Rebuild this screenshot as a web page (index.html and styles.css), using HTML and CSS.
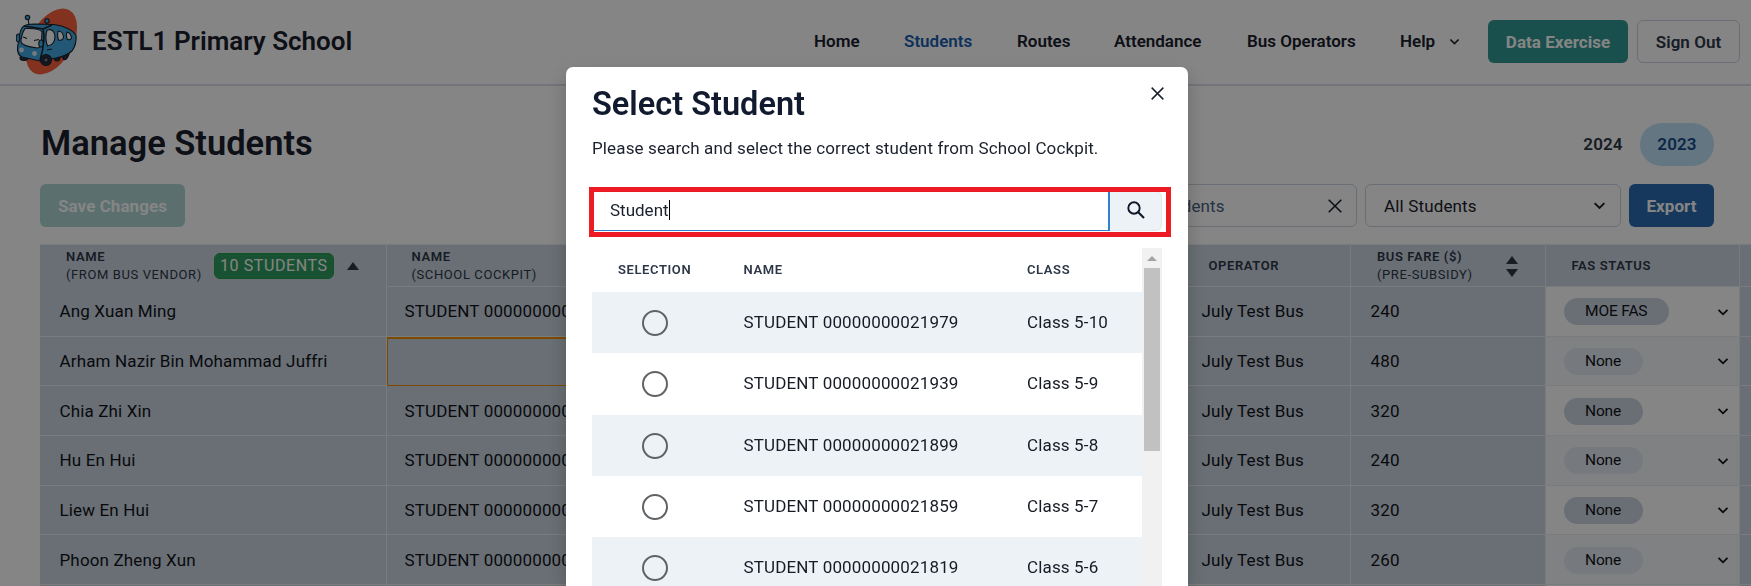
FILE: index.html
```html
<!DOCTYPE html>
<html lang="en">
<head>
<meta charset="utf-8">
<title>Manage Students</title>
<link rel="stylesheet" href="styles.css">
</head>
<body>
<svg class="defs" width="0" height="0">
  <symbol id="chev" viewBox="0 0 12 12"><path d="M1.500 3.800 6 8.300l4.500-4.500" fill="none" stroke="currentColor" stroke-width="1.800"/></symbol>
  <symbol id="cross" viewBox="0 0 14 14"><path d="M.7.7l12.600 12.600M13.300.7.7 13.300" fill="none" stroke="currentColor" stroke-width="1.600"/></symbol>
  <symbol id="up" viewBox="0 0 12 8"><path d="M6 0l6 8H0z" fill="currentColor"/></symbol>
</svg>
<header class="topbar">
  <svg class="logo" viewBox="0 0 62 68" width="62" height="68">
    <ellipse cx="35.500" cy="33.500" rx="21" ry="36" transform="rotate(30 35.500 33.500)" fill="#f9603a"/>
    <g stroke="#16202b" stroke-width="1.100" stroke-linejoin="round">
      <path d="M13 17 12 10M31 17l-.5-3" fill="none"/>
      <circle cx="11.500" cy="9.500" r="2.200" fill="#41a9e0"/><circle cx="31" cy="13" r="2.200" fill="#41a9e0"/>
      <ellipse cx="8" cy="50" rx="4" ry="2.500" fill="#27313d"/>
      <ellipse cx="41" cy="49" rx="3" ry="4" fill="#27313d"/><ellipse cx="50" cy="47" rx="2.500" ry="5" transform="rotate(25 50 47)" fill="#27313d"/>
      <path d="M8 18Q11 16 18 16L38 16.500Q54 19 60 27Q61 36 56 43Q50 48 40 50L24 53 6 49Q1 47 1.500 39L4 25Q5 20 8 18z" fill="#41a9e0"/>
      <path d="M27 21Q30 32 24 52M8 18 27 21 36 17" fill="none" stroke-width="1.500"/>
      <path d="M9 20.500Q5 27 5 34Q6 38 21 40Q25 40 25.500 34L26 24Q24 20 9 20.500z" fill="#fff"/>
      <path d="M31 22Q38 20 39 28Q39 37 31.500 38Q28.500 30 31 22z" fill="#fff"/>
      <path d="M42 23Q47 23 47.500 29Q47 33 42.500 32Q41 28 42 23zM51 24Q55 25 55.500 30Q54 33 51 31Q49.500 27 51 24z" fill="#fff"/>
      <path d="M7 29l4 1.500M18 32.500l5-1M31 42l5-1" fill="none"/>
      <ellipse cx="2" cy="30" rx="1.800" ry="4" fill="#41a9e0"/><ellipse cx="25" cy="35.500" rx="2.200" ry="3.500" fill="#41a9e0"/>
      <circle cx="30" cy="52" r="5.500" fill="#27313d"/><circle cx="30" cy="52" r="2.300" fill="#6c7986"/>
    </g>
    <circle cx="5.500" cy="42" r="2.400" fill="#dfeaf2"/><circle cx="18.500" cy="45.500" r="2.400" fill="#dfeaf2"/>
  </svg>
  <div class="brand"><span>ESTL1 Primary School</span></div>
  <nav class="nav">
    <a class="home">Home</a><a class="current">Students</a><a class="routes">Routes</a><a class="attend">Attendance</a><a class="ops">Bus Operators</a><a class="help">Help</a>
    <svg width="11" height="11"><use href="#chev"/></svg>
  </nav>
  <button class="btn teal exercise">Data Exercise</button>
  <button class="btn outline signout">Sign Out</button>
</header>
<main class="page">
  <div class="title-row">
    <h1>Manage Students</h1>
    <div class="years"><span class="year">2024</span><span class="year on">2023</span></div>
  </div>
  <div class="tools">
    <button class="btn teal save">Save Changes</button>
    <div class="field search"><span class="search-text">Search students</span><svg width="14" height="14"><use href="#cross"/></svg></div>
    <div class="field filter"><span>All Students</span><svg width="13" height="13"><use href="#chev"/></svg></div>
    <button class="btn blue export">Export</button>
  </div>
  <section class="grid">
    <div class="row head">
      <div class="cell hname"><div><b>NAME</b><i>(FROM BUS VENDOR)</i></div><span class="badge">10 STUDENTS</span><svg width="12" height="8"><use href="#up"/></svg></div>
      <div class="cell"><div><b>NAME</b><i>(SCHOOL COCKPIT)</i></div></div>
      <div class="cell hop"><b>OPERATOR</b></div>
      <div class="cell"><div><b>BUS FARE ($)</b><i>(PRE-SUBSIDY)</i></div><span class="sort"><svg width="12" height="8"><use href="#up"/></svg><svg class="down" width="12" height="8"><use href="#up"/></svg></span></div>
      <div class="cell hfas"><b>FAS STATUS</b></div>
      <div class="cell"></div>
    </div>
    <div class="row"><div class="cell">Ang Xuan Ming</div><div class="cell">STUDENT 00000000021979</div><div class="cell op">July Test Bus</div><div class="cell">240</div><div class="cell fas"><span class="pill">MOE FAS</span><svg width="12" height="12"><use href="#chev"/></svg></div><div class="cell"></div></div>
    <div class="row alt"><div class="cell">Arham Nazir Bin Mohammad Juffri</div><div class="cell empty"></div><div class="cell op">July Test Bus</div><div class="cell">480</div><div class="cell fas"><span class="pill">None</span><svg width="12" height="12"><use href="#chev"/></svg></div><div class="cell"></div></div>
    <div class="row"><div class="cell">Chia Zhi Xin</div><div class="cell">STUDENT 00000000021899</div><div class="cell op">July Test Bus</div><div class="cell">320</div><div class="cell fas"><span class="pill">None</span><svg width="12" height="12"><use href="#chev"/></svg></div><div class="cell"></div></div>
    <div class="row alt"><div class="cell">Hu En Hui</div><div class="cell">STUDENT 00000000021859</div><div class="cell op">July Test Bus</div><div class="cell">240</div><div class="cell fas"><span class="pill">None</span><svg width="12" height="12"><use href="#chev"/></svg></div><div class="cell"></div></div>
    <div class="row"><div class="cell">Liew En Hui</div><div class="cell">STUDENT 00000000021819</div><div class="cell op">July Test Bus</div><div class="cell">320</div><div class="cell fas"><span class="pill">None</span><svg width="12" height="12"><use href="#chev"/></svg></div><div class="cell"></div></div>
    <div class="row alt"><div class="cell">Phoon Zheng Xun</div><div class="cell">STUDENT 00000000021779</div><div class="cell op">July Test Bus</div><div class="cell">260</div><div class="cell fas"><span class="pill">None</span><svg width="12" height="12"><use href="#chev"/></svg></div><div class="cell"></div></div>
    <div class="row last"><div class="cell"></div><div class="cell"></div><div class="cell"></div><div class="cell"></div><div class="cell fas"></div><div class="cell"></div></div>
  </section>
</main>
<div class="overlay">
  <div class="modal" role="dialog">
    <svg class="close" width="13" height="13"><use href="#cross"/></svg>
    <h2>Select Student</h2>
    <p class="lead">Please search and select the correct student from School Cockpit.</p>
    <div class="lookup">
      <div class="entry"><span>Student</span><span class="caret"></span></div>
      <div class="go"><svg width="18" height="18" viewBox="0 0 18 18"><circle cx="7" cy="7" r="5.700" fill="none" stroke="#0f172a" stroke-width="1.900"/><path d="M11 11l6 6" stroke="#0f172a" stroke-width="2.100"/></svg></div>
      <div class="highlight"></div>
    </div>
    <div class="results">
      <div class="list">
        <div class="item item-head"><b class="sel">SELECTION</b><b>NAME</b><b>CLASS</b></div>
        <div class="item shade"><span class="radio"></span><span>STUDENT 00000000021979</span><span>Class 5-10</span></div>
        <div class="item"><span class="radio"></span><span>STUDENT 00000000021939</span><span>Class 5-9</span></div>
        <div class="item shade"><span class="radio"></span><span>STUDENT 00000000021899</span><span>Class 5-8</span></div>
        <div class="item"><span class="radio"></span><span>STUDENT 00000000021859</span><span>Class 5-7</span></div>
        <div class="item shade"><span class="radio"></span><span>STUDENT 00000000021819</span><span>Class 5-6</span></div>
      </div>
      <div class="scroll"><svg width="10" height="5" viewBox="0 0 10 5"><path d="M5 0l5 5H0z" fill="#a3a3a3"/></svg><div class="thumb"></div></div>
    </div>
  </div>
</div>
</body>
</html>
```

FILE: styles.css
```css
* { box-sizing: border-box; }
html, body { height: 586px; overflow: hidden; }
body { margin: 0; background: #fff; color: #1a202c; font-family: Roboto, "Liberation Sans", sans-serif; font-size: 17px; letter-spacing: 0.15px; }
.defs { display: block; width: 0; height: 0; }
h1, h2, p { margin: 0; }
svg { flex: none; display: block; }
.topbar { display: flex; align-items: center; height: 86px; padding: 0 11px 1px 16px; border-bottom: 2px solid #dcdce8; }
.brand { margin-left: 14px; width: 722px; padding-bottom: 2px; font-size: 26px; font-weight: 600; letter-spacing: 0; white-space: nowrap; }
.nav { display: flex; align-items: center; width: 674px; padding-bottom: 1px; font-weight: 600; letter-spacing: 0; white-space: nowrap; }
.nav a { flex: none; }
.home { width: 90px; }
.current { width: 113px; color: #1c5fb0; }
.routes { width: 97px; }
.attend { width: 133px; }
.ops { width: 153px; }
.help { width: 49px; }
.btn { display: flex; flex: none; align-items: center; justify-content: center; height: 43px; padding: 0; border: 0; border-radius: 6px; font: 700 17px Roboto, sans-serif; letter-spacing: 0.05px; color: #fff; white-space: nowrap; }
.teal { background: #319795; }
.blue { background: #2b6cb0; }
.outline { background: #fff; border: 1px solid #cbd5e0; color: #2d3748; font-weight: 600; }
.exercise { width: 140px; margin-right: 9px; }
.signout { width: 103px; }
.page { height: 500px; padding-left: 40px; overflow: hidden; }
.title-row { display: flex; justify-content: space-between; align-items: center; height: 98px; padding: 18px 37px 0 1px; }
h1 { padding-bottom: 2px; font-size: 34.500px; font-weight: 600; letter-spacing: 0; }
.years { display: flex; }
.year { display: flex; align-items: center; justify-content: center; width: 74px; height: 43px; border-radius: 22px; font-weight: 600; color: #2d3748; }
.on { background: #bee3f8; color: #1a4b8c; }
.tools { display: flex; padding-right: 37px; height: 60px; }
.save { width: 145px; opacity: .4; margin-right: auto; }
.field { display: flex; align-items: center; justify-content: space-between; height: 43px; border: 1px solid #cbd5e0; border-radius: 6px; }
.search { width: 290px; margin-right: 8px; padding: 0 14px 0 32px; }
.search-text { color: #4a5f80; }
.filter { width: 256px; margin-right: 8px; padding: 0 14px 0 18px; }
.export { width: 85px; }
.row { display: grid; grid-template-columns: 346.500px 797px 167.500px 194.500px 194px 20px; height: 49.670px; }
.cell { display: flex; align-items: center; background: #cbd5e0; border-right: 1px solid #e9edf2; border-bottom: 1px solid #e9edf2; padding-left: 19.500px; white-space: nowrap; color: #101319; }
.cell:nth-child(2) { padding-left: 18px; }
.op { padding-left: 18px; }
.head { height: 43px; font-size: 13px; letter-spacing: .6px; }
.head .cell { border-top: 1px solid #e9edf2; padding-top: 1px; padding-left: 26px; color: #2d3748; line-height: 18px; }
.head .cell:nth-child(2) { padding-left: 25px; }
.head .hop { padding-left: 25px; }
.head b, .head i { display: block; font-style: normal; font-weight: 600; }
.head i { font-weight: 400; }
.head .hname { border-bottom-color: #cbd5e0; }
.badge { display: flex; align-items: center; justify-content: center; width: 120px; height: 26px; margin: 0 13px 0 12px; border: 1px solid #22a045; border-radius: 6px; background: #2f9e63; color: #fff; font-size: 16px; }
.sort { display: grid; gap: 5px; margin-left: 33px; }
.down { transform: rotate(180deg); }
.empty { border: 1px solid #ef8f00; border-top-width: 2px; }
.fas { background: #fff; justify-content: space-between; padding: 1px 10px 0 18px; }
.alt .fas { background: #f5f7fb; }
.pill { height: 27px; line-height: 26px; border-radius: 14px; background: #cbd5e0; padding: 0 21.500px; font-size: 15.500px; letter-spacing: -0.150px; }
.alt .pill { background: #e2e8f0; }
.overlay { position: fixed; inset: 0; background: rgba(0,0,0,.48); display: flex; justify-content: center; padding: 67px 0 0 3px; overflow: hidden; }
.modal { position: relative; width: 622px; height: 519px; padding: 20px 26px 0; background: #fff; border-radius: 7px 7px 0 0; box-shadow: 0 8px 20px rgba(0,0,0,.22); overflow: hidden; }
.close { position: absolute; right: 24px; top: 20px; }
h2 { font-size: 32.500px; line-height: 34px; letter-spacing: 0; font-weight: 600; color: #111a2e; }
.lead { margin-top: 15px; line-height: 24px; letter-spacing: .13px; color: #1a202c; white-space: nowrap; }
.lookup { position: relative; display: flex; width: 571px; height: 40px; margin-top: 31px; }
.entry { display: flex; align-items: center; width: 518px; padding: 0 0 2px 17px; letter-spacing: 0; border: 1px solid #3182ce; border-right-width: 2px; }
.caret { width: 1px; height: 20px; background: #000; }
.go { display: flex; align-items: center; justify-content: center; width: 52px; padding-bottom: 2px; background: #edf2f7; border: 1px solid #e2e8f0; border-left: 0; border-radius: 0 6px 6px 0; }
.highlight { position: absolute; left: -3px; top: -4px; width: 582px; height: 50px; border: 5px solid #ed1c24; }
.results { display: flex; height: 338px; margin-top: 17px; overflow: hidden; }
.list { width: 550px; }
.item { display: grid; grid-template-columns: 151.500px 283.500px 1fr; align-items: center; height: 61.300px; color: #171b26; padding-bottom: 1px; }
.item-head { height: 44px; padding: 0 0 2px; font-size: 13px; letter-spacing: .6px; color: #2d3748; }
.item-head b { font-weight: 600; }
.sel { padding-left: 26px; }
.shade { background: #edf2f7; }
.radio { width: 26px; height: 26px; margin-left: 50px; margin-top: 2px; border: 2px solid #606366; border-radius: 50%; }
.scroll { display: flex; flex-direction: column; align-items: center; width: 20px; padding-top: 8px; background: #f1f1f1; }
.thumb { width: 16px; height: 183px; margin-top: 7px; background: #c1c1c1; }
```
